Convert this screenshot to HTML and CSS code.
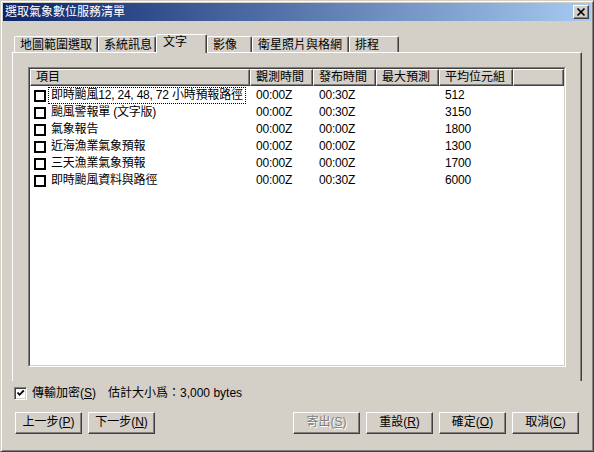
FILE: index.html
```html
<!DOCTYPE html>
<html lang="zh-Hant">
<head>
<meta charset="utf-8">
<title>選取氣象數位服務清單</title>
<link rel="stylesheet" href="styles.css">
</head>
<body>
<div class="window">
  <div class="titlebar">
    <span class="title">選取氣象數位服務清單</span>
    <span class="close">
      <svg width="14" height="12" viewBox="0 0 14 12"><path d="M3.5 2.5 L10.5 9.5 M10.5 2.5 L3.5 9.5" stroke="#000" stroke-width="1.7" fill="none"/></svg>
    </span>
  </div>
  <div class="content">
    <div class="tabs">
      <div class="tab t1">地圖範圍選取</div>
      <div class="tab t2">系統訊息</div>
      <div class="tab t3 active">文字</div>
      <div class="tab t4">影像</div>
      <div class="tab t5">衛星照片與格網</div>
      <div class="tab t6">排程</div>
    </div>
    <div class="panel">
      <div class="listview">
        <div class="lv-inner">
          <div class="header">
            <div class="hcell">項目</div>
            <div class="hcell">觀測時間</div>
            <div class="hcell">發布時間</div>
            <div class="hcell">最大預測</div>
            <div class="hcell">平均位元組</div>
            <div class="hcell"></div>
          </div>
          <div class="row">
            <div class="cell item"><span class="cb"></span><span class="label focus">即時颱風12, 24, 48, 72 小時預報路徑</span></div>
            <div class="cell">00:00Z</div><div class="cell">00:30Z</div><div class="cell"></div><div class="cell">512</div>
          </div>
          <div class="row">
            <div class="cell item"><span class="cb"></span><span class="label">颱風警報單 (文字版)</span></div>
            <div class="cell">00:00Z</div><div class="cell">00:30Z</div><div class="cell"></div><div class="cell">3150</div>
          </div>
          <div class="row">
            <div class="cell item"><span class="cb"></span><span class="label">氣象報告</span></div>
            <div class="cell">00:00Z</div><div class="cell">00:00Z</div><div class="cell"></div><div class="cell">1800</div>
          </div>
          <div class="row">
            <div class="cell item"><span class="cb"></span><span class="label">近海漁業氣象預報</span></div>
            <div class="cell">00:00Z</div><div class="cell">00:00Z</div><div class="cell"></div><div class="cell">1300</div>
          </div>
          <div class="row">
            <div class="cell item"><span class="cb"></span><span class="label">三天漁業氣象預報</span></div>
            <div class="cell">00:00Z</div><div class="cell">00:00Z</div><div class="cell"></div><div class="cell">1700</div>
          </div>
          <div class="row">
            <div class="cell item"><span class="cb"></span><span class="label">即時颱風資料與路徑</span></div>
            <div class="cell">00:00Z</div><div class="cell">00:30Z</div><div class="cell"></div><div class="cell">6000</div>
          </div>
        </div>
      </div>
    </div>
    <div class="options">
      <span class="check">
        <svg width="9" height="9" viewBox="0 0 9 9"><path d="M1.5 3.5 L3.5 5.8 L7.8 1.5" stroke="#000" stroke-width="1.8" fill="none"/></svg>
      </span>
      <span class="optlabel">傳輸加密(<u>S</u>)</span>
      <span class="size">估計大小爲：3,000 bytes</span>
    </div>
    <div class="buttons">
      <div class="btn">上一步(<u>P</u>)</div>
      <div class="btn">下一步(<u>N</u>)</div>
      <div class="spacer"></div>
      <div class="btn disabled">寄出(<u>S</u>)</div>
      <div class="btn">重設(<u>R</u>)</div>
      <div class="btn">確定(<u>O</u>)</div>
      <div class="btn">取消(<u>C</u>)</div>
    </div>
  </div>
</div>
</body>
</html>
```

FILE: styles.css
```css
html, body {
  margin: 0;
  padding: 0;
  background: #d4d0c8;
}
body {
  font-family: "Liberation Sans", "Noto Sans CJK TC", sans-serif;
  font-size: 12px;
  color: #000;
}
.window {
  width: 594px;
  height: 452px;
  box-sizing: border-box;
  border: 1px solid;
  border-color: #d4d0c8 #404040 #404040 #d4d0c8;
  background: #d4d0c8;
  box-shadow: inset 1px 1px #fff, inset -1px -1px #808080;
  padding: 2px;
}
.titlebar {
  height: 18px;
  background: linear-gradient(to right, #0a246a, #a6caf0);
  display: flex;
  align-items: flex-start;
  justify-content: space-between;
  color: #fff;
}
.title {
  line-height: 18px;
  padding-left: 2px;
}
.close {
  width: 16px;
  height: 14px;
  box-sizing: border-box;
  margin: 2px 2px 0 0;
  background: #d4d0c8;
  border: 1px solid;
  border-color: #fff #404040 #404040 #fff;
  box-shadow: inset -1px -1px #808080;
  display: flex;
  align-items: center;
  justify-content: center;
}
.close svg {
  display: block;
}
.content {
  padding: 13px 9px 0 9px;
}
.tabs {
  display: flex;
  align-items: flex-end;
  height: 18px;
  padding-left: 2px;
  position: relative;
  z-index: 1;
}
.tab {
  height: 16px;
  box-sizing: border-box;
  border-left: 1px solid #fff;
  border-top: 1px solid #fff;
  border-right: 1px solid #404040;
  border-top-left-radius: 2px;
  border-top-right-radius: 2px;
  box-shadow: inset -1px 0 #808080;
  padding-left: 5px;
  line-height: 14px;
  padding-top: 1px;
  white-space: nowrap;
  background: #d4d0c8;
}
.tab.active {
  height: 19px;
  margin-bottom: -1px;
  padding-left: 6px;
  padding-top: 0;
  position: relative;
  z-index: 2;
}
.t1 { width: 84px; }
.t2 { width: 58px; }
.t3 { width: 51px; }
.t4 { width: 45px; }
.t5 { width: 97px; }
.t6 { width: 50px; }
.panel {
  height: 329px;
  box-sizing: border-box;
  border-top: 1px solid #fff;
  border-left: 1px solid #fff;
  border-right: 1px solid #404040;
  box-shadow: inset -1px 0 #808080;
  padding: 14px 15px 14px 15px;
}
.listview {
  height: 300px;
  box-sizing: border-box;
  border: 1px solid;
  border-color: #808080 #fff #fff #808080;
}
.lv-inner {
  height: 100%;
  box-sizing: border-box;
  border: 1px solid;
  border-color: #404040 #d4d0c8 #d4d0c8 #404040;
  background: #fff;
}
.header {
  display: grid;
  grid-template-columns: 220px 63px 63px 63px 74px 1fr;
  height: 17px;
  background: #d4d0c8;
}
.hcell {
  box-sizing: border-box;
  border: 1px solid;
  border-color: #fff #404040 #404040 #fff;
  box-shadow: inset -1px -1px #808080;
  padding-left: 5px;
  line-height: 14px;
  white-space: nowrap;
}
.row {
  display: grid;
  grid-template-columns: 220px 63px 63px 63px 74px 1fr;
  height: 17px;
  line-height: 17px;
  letter-spacing: -0.2px;
}
.header + .row {
  margin-top: 1px;
}
.cell {
  padding-left: 6px;
  white-space: nowrap;
}
.cell.item {
  padding-left: 4px;
  display: flex;
  align-items: center;
}
.cb {
  width: 12px;
  height: 12px;
  box-sizing: border-box;
  border: 2px solid #000;
  background: #fff;
  flex: none;
}
.label {
  margin-left: 2px;
  padding: 0 2px 0 2px;
  height: 17px;
  box-sizing: border-box;
  line-height: 15px;
  border: 1px solid transparent;
}
.label.focus {
  border: 1px dotted #000;
}
.options {
  display: flex;
  align-items: center;
  height: 13px;
  margin-top: 6px;
  padding-left: 2px;
}
.check {
  width: 13px;
  height: 13px;
  box-sizing: border-box;
  border: 1px solid;
  border-color: #808080 #fff #fff #808080;
  background: #fff;
  box-shadow: inset 1px 1px #404040, inset -1px -1px #d4d0c8;
  display: flex;
  align-items: center;
  justify-content: center;
  flex: none;
}
.check svg {
  display: block;
}
.optlabel {
  margin-left: 5px;
  line-height: 13px;
}
.size {
  margin-left: 12px;
  line-height: 13px;
}
.buttons {
  display: flex;
  gap: 6px;
  margin-top: 12px;
  padding: 0 3px;
}
.spacer {
  flex: 1;
}
.btn {
  width: 67px;
  height: 22px;
  box-sizing: border-box;
  border: 1px solid;
  border-color: #fff #404040 #404040 #fff;
  box-shadow: inset -1px -1px #808080;
  text-align: center;
  line-height: 19px;
  white-space: nowrap;
}
.btn.disabled {
  color: #808080;
  text-shadow: 1px 1px #fff;
}
u {
  text-underline-offset: 1px;
}
```
